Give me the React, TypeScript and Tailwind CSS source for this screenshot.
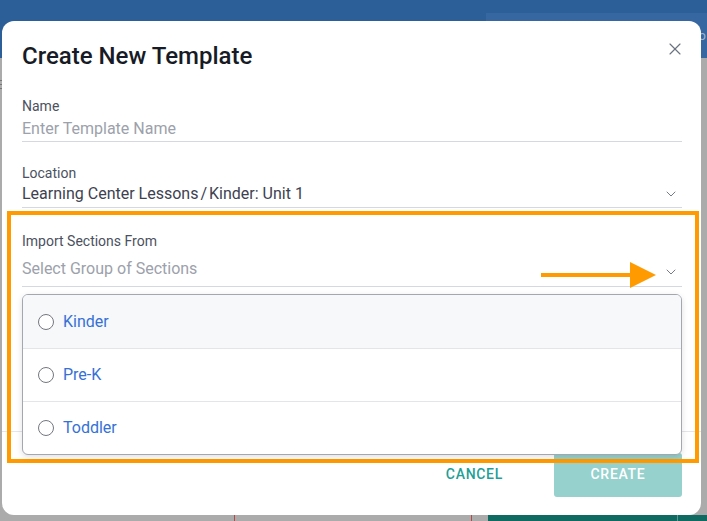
import { X, ChevronDown } from "lucide-react";

type Option = { id: string; label: string };

const SECTION_GROUPS: Option[] = [
  { id: "kinder", label: "Kinder" },
  { id: "prek", label: "Pre-K" },
  { id: "toddler", label: "Toddler" },
];

function FieldLabel({ children }: { children: string }) {
  return <p className="h-[20px] text-[14px] leading-[20px] text-[#4b5160]">{children}</p>;
}

export default function App() {
  return (
    <div className="relative flex h-[521px] w-[707px] flex-col overflow-hidden bg-[#ababab] font-['Roboto',sans-serif]">
      {/* dimmed app chrome behind the dialog */}
      <header className="flex h-[58px] shrink-0 bg-[#2c5f98]">
        <div className="ml-auto mt-[13px] flex h-[45px] w-[221px] items-center justify-end overflow-hidden bg-[#3667a0] pr-[1px]">
          <span className="text-[13px] leading-none text-[#9fb4cf]">o</span>
        </div>
      </header>
      <div className="flex flex-1 flex-col">
        <div className="mt-[22px] flex flex-col gap-[3px] pl-0">
          <span className="h-[1px] w-[3px] bg-[#777]" />
          <span className="h-[1px] w-[3px] bg-[#777]" />
          <span className="h-[1px] w-[3px] bg-[#777]" />
        </div>
        <div className="mt-auto flex h-[6px]">
          <div className="w-[234px]" />
          <div className="w-[1px] bg-[#b34a4a]" />
          <div className="w-[236px]" />
          <div className="w-[1px] bg-[#b34a4a]" />
          <div className="w-[16px]" />
          <div className="flex flex-1 bg-[#0f6a61]">
            <div className="ml-[189px] w-[1px] bg-[#5a9a93]" />
          </div>
        </div>
      </div>

      {/* dialog */}
      <div className="absolute left-[2px] top-[21px] flex h-[494px] w-[699px] flex-col rounded-[12px] bg-white">
        <div className="relative pl-[20px] pr-[19px] pt-[21px]">
          <h2 className="h-[28px] text-[24px] font-medium leading-[28px] text-[#161b26]">Create New Template</h2>
          <button type="button" className="absolute right-[16px] top-[18px] text-[#6b7280]">
            <X size={20} strokeWidth={1.4} />
          </button>
        </div>

        <div className="flex-1 pl-[20px] pr-[19px]">
          <div className="mt-[26px]">
            <FieldLabel>Name</FieldLabel>
            <div className="mt-[1px] h-[25px] border-b border-[#d5d8de] text-[16px] leading-[24px] text-[#9ca1ab]">
              Enter Template Name
            </div>
          </div>

          <div className="mt-[21px]">
            <FieldLabel>Location</FieldLabel>
            <div className="mt-[-1px] flex h-[26px] items-start justify-between border-b border-[#d5d8de]">
              <span className="text-[16px] leading-[24px] text-[#3d4250]">
                Learning Center Lessons<span className="mx-[2px]">/</span>Kinder: Unit 1
              </span>
              <ChevronDown size={16} strokeWidth={1.4} className="mr-[3px] mt-[4px] text-[#6b7280]" />
            </div>
          </div>

          <div className="relative mt-[23px]">
            <FieldLabel>Import Sections From</FieldLabel>
            <div className="mt-[6px] flex h-[30px] items-start justify-between border-b border-[#d5d8de]">
              <span className="text-[16px] leading-[24px] text-[#9ca1ab]">Select Group of Sections</span>
              <ChevronDown size={16} strokeWidth={1.4} className="mr-[3px] mt-[7px] text-[#6b7280]" />
            </div>

            {/* open options menu */}
            <ul className="absolute left-0 right-0 top-[calc(100%+7px)] z-10 overflow-hidden rounded-[6px] border border-[#a3a7b0] bg-white shadow-[0_2px_6px_rgba(0,0,0,0.12)]">
              {SECTION_GROUPS.map((opt, i) => (
                <li
                  key={opt.id}
                  className={`flex h-[53px] items-center gap-[9px] pl-[15px] ${
                    i === 0 ? "bg-[#f7f8fa]" : "border-t border-[#e3e5e9]"
                  }`}
                >
                  <span className="h-[16px] w-[16px] rounded-full border border-[#74777e] bg-white" />
                  <span className="text-[16px] leading-[24px] text-[#3571d6]">{opt.label}</span>
                </li>
              ))}
            </ul>
          </div>
        </div>

        <div className="flex h-[84px] items-center justify-end gap-[35px] border-t border-[#e3e5e9] pl-[20px] pr-[19px] pt-[2px]">
          <button
            type="button"
            className="px-[16px] text-[14px] font-medium uppercase tracking-[0.7px] text-[#1f9f97]"
          >
            Cancel
          </button>
          <button
            type="button"
            className="h-[44px] w-[128px] rounded-[3px] bg-[#96d1cd] text-[14px] font-medium uppercase tracking-[0.7px] text-white"
          >
            Create
          </button>
        </div>
      </div>

      {/* highlight frame and pointer */}
      <div className="pointer-events-none absolute left-[7px] top-[211px] h-[252px] w-[692px] border-4 border-[#ff9a00]" />
      <svg className="pointer-events-none absolute left-[540px] top-[261px]" width="118" height="28" viewBox="0 0 118 28">
        <rect x="1" y="12" width="90" height="4" fill="#ff9a00" />
        <polygon points="90,1 116,14 90,27" fill="#ff9a00" />
      </svg>
    </div>
  );
}
